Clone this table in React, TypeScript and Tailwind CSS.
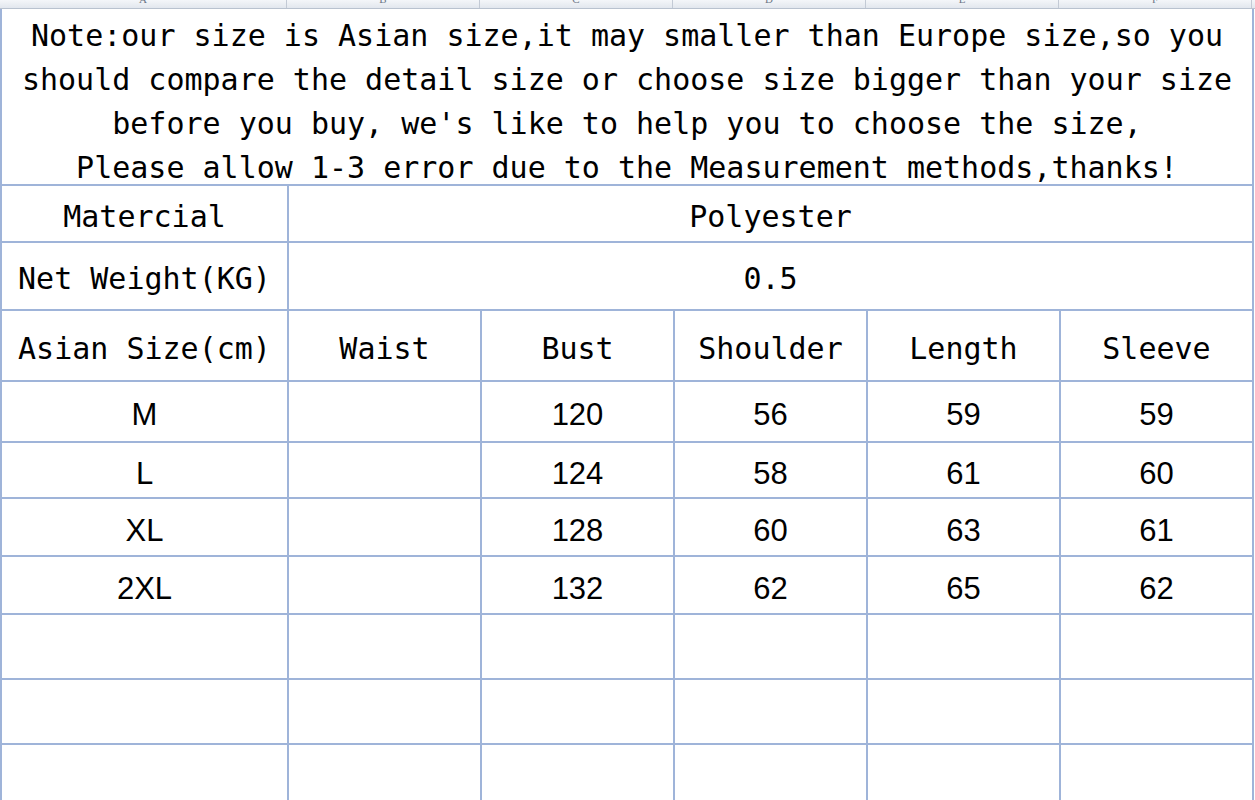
import { Fragment } from "react";

const cols = ["A", "B", "C", "D", "E", "F"];

const rows = [
  { size: "M", bust: "120", shoulder: "56", length: "59", sleeve: "59", h: "h-[59px]" },
  { size: "L", bust: "124", shoulder: "58", length: "61", sleeve: "60", h: "h-[54px]" },
  { size: "XL", bust: "128", shoulder: "60", length: "63", sleeve: "61", h: "h-[56px]" },
  { size: "2XL", bust: "132", shoulder: "62", length: "65", sleeve: "62", h: "h-[56px]" },
];

const emptyRows = ["h-[63px]", "h-[63px]", "h-[60px]"];

const mono = "font-['DejaVu_Sans_Mono',monospace] text-[30px] leading-none";
const sans = "font-['Liberation_Sans',Arial,sans-serif] text-[31px] leading-none";
const cell = "flex items-center justify-center bg-white pt-[6px] text-black";

export default function App() {
  return (
    <div className="h-[800px] w-[1255px] overflow-hidden bg-white">
      {/* ── spreadsheet column header, mostly scrolled off ── */}
      <div className="grid h-[9px] grid-cols-[287px_193px_193px_193px_193px_193px_3px] overflow-hidden border-b border-[#b9c2cf] bg-gradient-to-b from-[#f4f6f9] to-[#e2e7ee]">
        {cols.map(c => (
          <div
            key={c}
            className="relative border-r border-[#c3cad5] text-center font-['Liberation_Serif',serif] text-[11px] leading-none text-[#6c7686]"
          >
            <span className="absolute inset-x-0 -top-[6px]">{c}</span>
          </div>
        ))}
        <div />
      </div>

      <div className="grid w-[1254px] grid-cols-[285px_191px_191px_191px_191px_191px] gap-[2px] bg-[#9fb4d9] px-[2px] pb-[2px]">
        {/* note */}
        <div className={`col-span-6 h-[175px] overflow-hidden bg-white pt-[5px] text-center ${mono} !leading-[44px] text-black`}>
          <p>Note:our size is Asian size,it may smaller than Europe size,so you</p>
          <p>should compare the detail size or choose size bigger than your size</p>
          <p>before you buy, we's like to help you to choose the size,</p>
          <p>Please allow 1-3 error due to the Measurement methods,thanks!</p>
        </div>

        {/* material / weight */}
        <div className={`${cell} ${mono} h-[55px]`}>Matercial</div>
        <div className={`${cell} ${mono} col-span-5 h-[55px]`}>Polyester</div>
        <div className={`${cell} ${mono} h-[66px]`}>Net Weight(KG)</div>
        <div className={`${cell} ${mono} col-span-5 h-[66px]`}>0.5</div>

        {/* header row */}
        {["Asian Size(cm)", "Waist", "Bust", "Shoulder", "Length", "Sleeve"].map(h => (
          <div key={h} className={`${cell} ${mono} h-[69px]`}>
            {h}
          </div>
        ))}

        {/* sizes */}
        {rows.map(r => (
          <Fragment key={r.size}>
            <div className={`${cell} ${sans} ${r.h}`}>{r.size}</div>
            <div className={`${cell} ${sans} ${r.h}`}></div>
            <div className={`${cell} ${sans} ${r.h}`}>{r.bust}</div>
            <div className={`${cell} ${sans} ${r.h}`}>{r.shoulder}</div>
            <div className={`${cell} ${sans} ${r.h}`}>{r.length}</div>
            <div className={`${cell} ${sans} ${r.h}`}>{r.sleeve}</div>
          </Fragment>
        ))}

        {/* blank rows */}
        {emptyRows.map((h, i) =>
          cols.map(c => <div key={`${i}-${c}`} className={`bg-white ${h}`} />)
        )}
      </div>
    </div>
  );
}
